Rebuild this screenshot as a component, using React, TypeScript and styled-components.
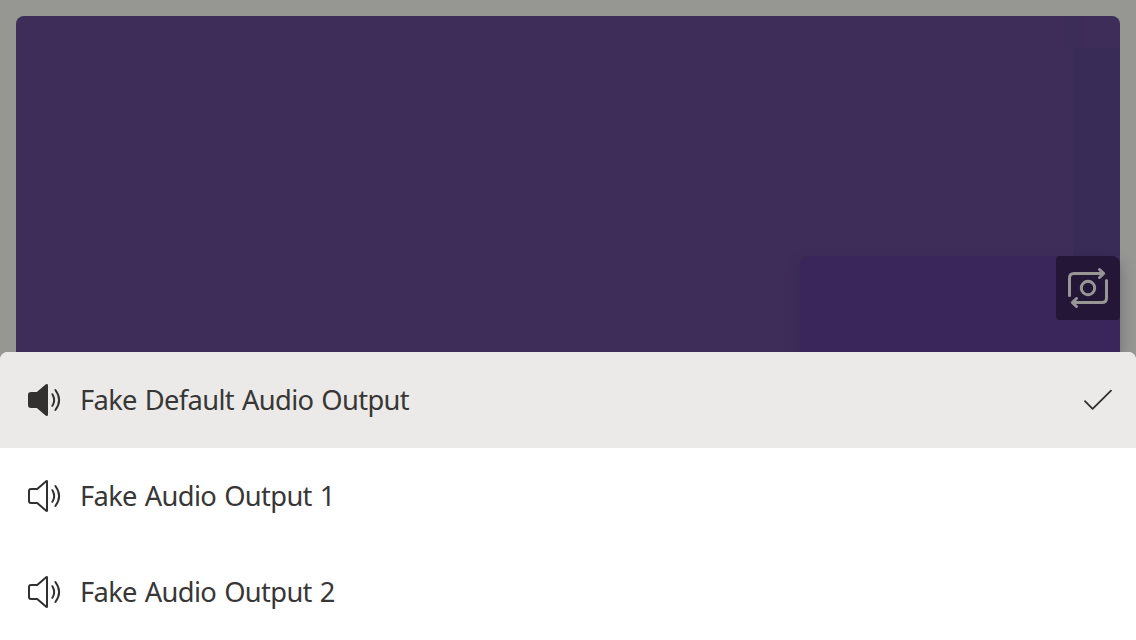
import React from 'react';
import styled, { createGlobalStyle } from 'styled-components';

const GlobalStyle = createGlobalStyle`
  * { box-sizing: border-box; }
  body { margin: 0; background: #969693; overflow: hidden; }
`;

const Screen = styled.main`
  display: flex;
  flex-direction: column;
  height: 640px;
  font-family: 'Segoe UI', 'Noto Sans', sans-serif;
  color: #323130;
`;

const CallArea = styled.section`
  flex: 0 0 352px;
  display: flex;
  padding: 16px 16px 0;
  overflow: hidden;
`;

const RemoteVideo = styled.div`
  flex: 1;
  display: flex;
  align-items: flex-end;
  justify-content: flex-end;
  border-radius: 8px 8px 0 0;
  background:
    linear-gradient(#392c57, #392c57) 1057px 32px / 47px 208px no-repeat,
    linear-gradient(#3b2d57, #3b2d57) 1047px 0 / 20px 32px no-repeat,
    #3e2d58;
`;

const LocalPreview = styled.div`
  display: flex;
  align-items: flex-start;
  justify-content: flex-end;
  width: 320px;
  height: 96px;
  border-radius: 8px 8px 0 0;
  background: #3a265a;
  box-shadow: 0 6px 14px rgba(32, 38, 70, 0.36);
`;

const SwitchCamera = styled.button`
  width: 64px;
  height: 64px;
  padding: 0;
  border: 0;
  border-radius: 4px 8px 4px 4px;
  background: #231637;
  color: #989695;
`;

const Sheet = styled.ul`
  flex: 1;
  margin: 0;
  padding: 0;
  list-style: none;
  border-radius: 8px 8px 0 0;
  overflow: hidden;
  background: #fff;
`;

const Device = styled.li<{ $selected?: boolean }>`
  display: flex;
  align-items: center;
  height: 96px;
  padding: 0 20px 0 24px;
  background: ${({ $selected }) => ($selected ? '#ebeae8' : '#fff')};
`;

const Label = styled.span`
  flex: 1;
  margin-left: 16px;
  color: #383736;
  font-size: 27.3px;
  line-height: 40px;
  letter-spacing: -0.65px;
  word-spacing: 1.5px;
  white-space: nowrap;
`;

const Glyph = styled.svg`
  display: block;
  flex: none;
  fill: none;
  stroke: currentColor;
  stroke-linecap: round;
  stroke-linejoin: round;
`;

const Speaker = ({ filled }: { filled?: boolean }) => (
  <Glyph width="40" height="40" viewBox="0 0 40 40" strokeWidth="2">
    <path
      d="M7 13h6.2L22.2 5.2Q23 4.6 23 5.5v29Q23 35.4 22.2 34.8L13.2 27H7Q5 27 5 25V15Q5 13 7 13Z"
      fill={filled ? 'currentColor' : 'none'}
    />
    <path d="M28.4 14.2Q32 20 28.4 25.8M31.4 10Q38.8 20 31.4 30" />
  </Glyph>
);

const Check = () => (
  <Glyph width="32" height="32" viewBox="0 0 32 32" strokeWidth="1.8">
    <path d="M1 17.2l7.6 7.6L27 6.6" />
  </Glyph>
);

const CameraSwap = () => (
  <Glyph width="64" height="64" viewBox="0 0 64 64" strokeWidth="3">
    <path d="M13.5 39.5V22q0-4.5 4.5-4.5h29.5M43.5 13.5l4.2 4-4.2 4" />
    <path d="M50.5 24.5V42q0 4.5-4.5 4.5H16.5M20.5 42.5l-4.2 4 4.2 4" />
    <circle cx="32" cy="32" r="6.7" />
  </Glyph>
);

const devices = ['Fake Default Audio Output', 'Fake Audio Output 1', 'Fake Audio Output 2'];

export default function App() {
  return (
    <Screen>
      <GlobalStyle />
      <CallArea>
        <RemoteVideo>
          <LocalPreview>
            <SwitchCamera>
              <CameraSwap />
            </SwitchCamera>
          </LocalPreview>
        </RemoteVideo>
      </CallArea>
      <Sheet>
        {devices.map((name, i) => (
          <Device key={name} $selected={i === 0}>
            <Speaker filled={i === 0} />
            <Label>{name}</Label>
            {i === 0 && <Check />}
          </Device>
        ))}
      </Sheet>
    </Screen>
  );
}
